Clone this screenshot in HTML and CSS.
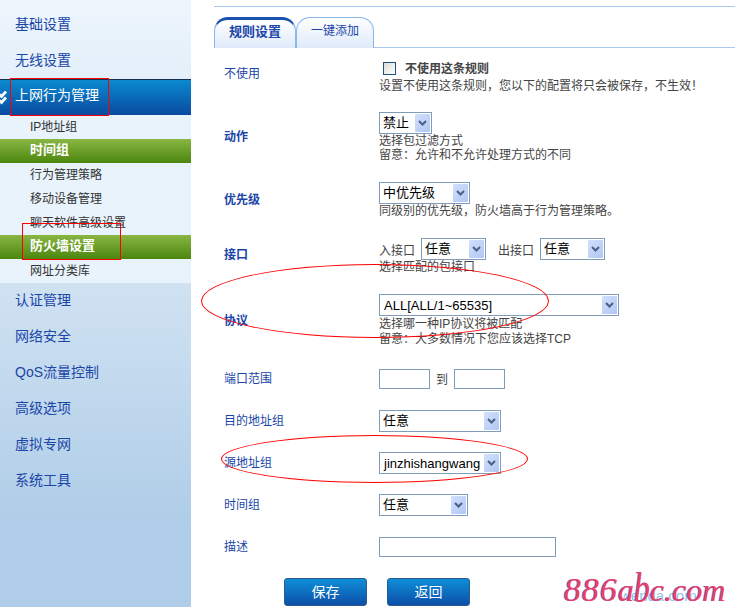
FILE: index.html
```html
<!DOCTYPE html>
<html lang="zh-CN">
<head>
    <meta charset="UTF-8">
    <meta name="viewport" content="width=device-width, initial-scale=1.0">
    <title>防火墙设置</title>
    <link rel="stylesheet" href="styles.css">
</head>
<body>
    <div class="page">
        <!-- Left menu -->
        <nav class="sidebar">
            <div class="menu-top">
                <a class="menu-item">基础设置</a>
                <a class="menu-item">无线设置</a>
            </div>
            <a class="menu-current">
                <svg class="menu-tick" width="7" height="14" viewBox="0 0 7 14">
                    <path d="M-2 2.5 L1.5 5.5 L6 0.5 M-2 8.5 L1.5 11.5 L6 6.5" fill="none" stroke="#fff" stroke-width="2.8"/>
                </svg>
                上网行为管理
            </a>
            <div class="submenu">
                <a class="sub-item">IP地址组</a>
                <a class="sub-item active">时间组</a>
                <a class="sub-item">行为管理策略</a>
                <a class="sub-item">移动设备管理</a>
                <a class="sub-item">聊天软件高级设置</a>
                <a class="sub-item active">防火墙设置</a>
                <a class="sub-item">网址分类库</a>
            </div>
            <div class="menu-bottom">
                <a class="menu-item">认证管理</a>
                <a class="menu-item">网络安全</a>
                <a class="menu-item">QoS流量控制</a>
                <a class="menu-item">高级选项</a>
                <a class="menu-item">虚拟专网</a>
                <a class="menu-item">系统工具</a>
            </div>
        </nav>

        <!-- Rule form -->
        <main class="content">
            <div class="tabs">
                <a class="tab tab-on">规则设置</a>
                <a class="tab tab-off">一键添加</a>
            </div>

            <div class="row row-use">
                <div class="label">不使用</div>
                <div class="field">
                    <label class="check-line"><span class="checkbox"></span><b>不使用这条规则</b></label>
                    <p class="hint">设置不使用这条规则，您以下的配置将只会被保存，不生效！</p>
                </div>
            </div>

            <div class="row row-action">
                <div class="label strong">动作</div>
                <div class="field">
                    <div class="select w-53"><span class="cn">禁止</span><i class="arrow"><svg width="9" height="6" viewBox="0 0 9 6"><path d="M1 1 L4.5 4.5 L8 1" fill="none" stroke="#4a5f85" stroke-width="2"/></svg></i></div>
                    <p class="hint">选择包过滤方式</p>
                    <p class="hint">留意：允许和不允许处理方式的不同</p>
                </div>
            </div>

            <div class="row row-priority">
                <div class="label strong">优先级</div>
                <div class="field">
                    <div class="select w-91"><span class="cn">中优先级</span><i class="arrow"><svg width="9" height="6" viewBox="0 0 9 6"><path d="M1 1 L4.5 4.5 L8 1" fill="none" stroke="#4a5f85" stroke-width="2"/></svg></i></div>
                    <p class="hint">同级别的优先级，防火墙高于行为管理策略。</p>
                </div>
            </div>

            <div class="row row-port">
                <div class="label strong">接口</div>
                <div class="field">
                    <div class="inline-line">
                        <span class="inline-text">入接口</span>
                        <div class="select w-65"><span class="cn">任意</span><i class="arrow"><svg width="9" height="6" viewBox="0 0 9 6"><path d="M1 1 L4.5 4.5 L8 1" fill="none" stroke="#4a5f85" stroke-width="2"/></svg></i></div>
                        <span class="inline-text out">出接口</span>
                        <div class="select w-65"><span class="cn">任意</span><i class="arrow"><svg width="9" height="6" viewBox="0 0 9 6"><path d="M1 1 L4.5 4.5 L8 1" fill="none" stroke="#4a5f85" stroke-width="2"/></svg></i></div>
                    </div>
                    <p class="hint">选择匹配的包接口</p>
                </div>
            </div>

            <div class="row row-proto">
                <div class="label strong">协议</div>
                <div class="field">
                    <div class="select w-240"><span>ALL[ALL/1~65535]</span><i class="arrow"><svg width="9" height="6" viewBox="0 0 9 6"><path d="M1 1 L4.5 4.5 L8 1" fill="none" stroke="#4a5f85" stroke-width="2"/></svg></i></div>
                    <p class="hint hint-gap">选择哪一种IP协议将被匹配</p>
                    <p class="hint hint-gap">留意：大多数情况下您应该选择TCP</p>
                </div>
            </div>

            <div class="row row-range">
                <div class="label">端口范围</div>
                <div class="field range-line">
                    <input class="text-input w-51" type="text">
                    <span class="inline-text">到</span>
                    <input class="text-input w-51" type="text">
                </div>
            </div>

            <div class="row row-addr">
                <div class="label">目的地址组</div>
                <div class="field">
                    <div class="select w-122"><span class="cn">任意</span><i class="arrow"><svg width="9" height="6" viewBox="0 0 9 6"><path d="M1 1 L4.5 4.5 L8 1" fill="none" stroke="#4a5f85" stroke-width="2"/></svg></i></div>
                </div>
            </div>

            <div class="row row-addr">
                <div class="label">源地址组</div>
                <div class="field">
                    <div class="select w-122"><span>jinzhishangwang</span><i class="arrow"><svg width="9" height="6" viewBox="0 0 9 6"><path d="M1 1 L4.5 4.5 L8 1" fill="none" stroke="#4a5f85" stroke-width="2"/></svg></i></div>
                </div>
            </div>

            <div class="row row-time">
                <div class="label">时间组</div>
                <div class="field">
                    <div class="select w-89"><span class="cn">任意</span><i class="arrow"><svg width="9" height="6" viewBox="0 0 9 6"><path d="M1 1 L4.5 4.5 L8 1" fill="none" stroke="#4a5f85" stroke-width="2"/></svg></i></div>
                </div>
            </div>

            <div class="row row-desc">
                <div class="label">描述</div>
                <div class="field">
                    <input class="text-input w-177" type="text">
                </div>
            </div>

            <div class="buttons">
                <button class="btn">保存</button>
                <button class="btn">返回</button>
            </div>
        </main>

        <!-- Red marks drawn over the screenshot -->
        <div class="mark-rect mark-menu"></div>
        <div class="mark-rect mark-firewall"></div>
        <div class="mark-oval mark-proto"></div>
        <div class="mark-oval mark-source"></div>

        <div class="watermark-under">wenda.com</div>
        <div class="watermark"><span class="wm-num">886</span>a<span class="wm-tall">b</span>c.com</div>
    </div>
</body>
</html>
```

FILE: styles.css
```css
/* Reset */
* {
    margin: 0;
    padding: 0;
    box-sizing: border-box;
    font-family: "Liberation Sans", "Noto Sans CJK SC", sans-serif;
}

body {
    background: #fff;
    overflow: hidden;
}

.page {
    position: relative;
    display: flex;
    width: 735px;
    height: 607px;
    overflow: hidden;
}

/* Sidebar */
.sidebar {
    display: flex;
    flex-direction: column;
    flex: 0 0 191px;
    height: 607px;
    background: #e8f3fc;
}

.menu-top {
    height: 79px;
    padding-top: 6px;
    background: linear-gradient(to bottom, #eef6fd, #e3effa);
}

.menu-item {
    display: block;
    height: 36px;
    padding-left: 15px;
    line-height: 36px;
    font-size: 14px;
    color: #1a46a8;
}

.menu-bottom .menu-item {
    line-height: 34px;
}

.menu-current {
    position: relative;
    display: block;
    height: 36px;
    padding-left: 15px;
    line-height: 31px;
    font-size: 14px;
    color: #fff;
    border-top: 1px solid #12304f;
    background: linear-gradient(to bottom, #0a8ad0, #0a4aa0);
}

.menu-tick {
    position: absolute;
    left: 0;
    top: 11px;
}

.submenu {
    height: 168px;
    background: #e8f3fc;
}

.sub-item {
    display: block;
    height: 24px;
    padding-left: 30px;
    line-height: 24px;
    font-size: 12px;
    color: #333;
}

.sub-item.active {
    line-height: 22px;
    font-size: 13px;
    font-weight: bold;
    color: #fff;
    background: linear-gradient(to bottom, #8ab643, #4b860f);
}

.menu-bottom {
    flex: 1;
    background: linear-gradient(to bottom, #d0e2f2 0, #afcde8 243px, #afcde8 100%);
}

/* Main area */
.content {
    flex: 1;
    height: 607px;
    padding: 6px 0 0 23px;
}

.tabs {
    display: flex;
    align-items: flex-end;
    height: 42px;
    margin-bottom: 12px;
    padding-top: 10px;
    border-top: 1px solid #a8c8f0;
    border-bottom: 1px solid #a8c8f0;
}

.tab {
    height: 31px;
    margin-bottom: -1px;
    text-align: center;
    border: 1px solid #8ab6ea;
    border-bottom: none;
    border-radius: 14px 14px 0 0;
    background: linear-gradient(to bottom, #fff, #dfeafa);
    color: #1a46a8;
}

.tab-on {
    width: 82px;
    border-top: 3px solid #1a52b0;
    line-height: 23px;
    font-size: 13px;
    font-weight: bold;
}

.tab-off {
    width: 78px;
    line-height: 27px;
    font-size: 12px;
}

/* Form rows */
.row {
    display: grid;
    grid-template-columns: 155px 1fr;
    padding-left: 10px;
}

.row-use { height: 52px; }
.row-action { height: 70px; }
.row-priority { height: 56px; }
.row-port { height: 56px; }
.row-proto { height: 75px; }
.row-range { height: 41px; }
.row-addr { height: 42px; }
.row-time { height: 43px; }
.row-desc { height: 41px; }

.label {
    font-size: 12px;
    line-height: 14px;
    color: #1a46a8;
}

.label.strong {
    font-weight: bold;
}

.row-use .label { margin-top: 7px; }
.row-action .label { margin-top: 18px; }
.row-priority .label { margin-top: 11px; }
.row-port .label { margin-top: 10px; }
.row-proto .label { margin-top: 20px; }
.row-range .label { margin-top: 3px; }
.row-addr .label { margin-top: 4px; }
.row-time .label { margin-top: 4px; }
.row-desc .label { margin-top: 3px; }

.hint {
    font-size: 12px;
    line-height: 14px;
    color: #444;
}

.hint-gap {
    line-height: 15px;
}

.row-proto .select {
    margin-bottom: 1px;
}

.check-line {
    display: flex;
    align-items: center;
    gap: 9px;
    height: 16px;
    margin-bottom: 3px;
    padding-left: 4px;
    font-size: 12px;
    color: #444;
}

.check-line b {
    padding-bottom: 2px;
}

.checkbox {
    width: 13px;
    height: 13px;
    border: 1px solid #1c5180;
    background: linear-gradient(135deg, #dcdcd7, #fff);
}

/* Select boxes */
.select {
    display: flex;
    align-items: center;
    justify-content: space-between;
    height: 22px;
    padding: 0 1px 0 4px;
    border: 1px solid #7f9db9;
    background: #fff;
    font-size: 13px;
    color: #000;
    white-space: nowrap;
}

.select .cn {
    margin-left: -1px;
    padding-bottom: 3px;
}

.arrow {
    display: flex;
    align-items: center;
    justify-content: center;
    flex: 0 0 15px;
    height: 18px;
    border-radius: 1px;
    background: linear-gradient(135deg, #d3e0fb, #b0c6f5);
}

.w-53 { width: 53px; }
.w-65 { width: 65px; }
.w-89 { width: 89px; }
.w-91 { width: 91px; }
.w-122 { width: 122px; }
.w-240 { width: 240px; }
.w-51 { width: 51px; }
.w-177 { width: 177px; }

.inline-line {
    display: flex;
    align-items: center;
}

.inline-text {
    font-size: 12px;
    color: #444;
    white-space: nowrap;
}

.inline-line .inline-text {
    margin-right: 6px;
}

.inline-line .out {
    margin-left: 12px;
}

.range-line {
    display: flex;
    align-items: flex-start;
    gap: 6px;
}

.range-line .inline-text {
    line-height: 22px;
}

.text-input {
    height: 20px;
    border: 1px solid #7f9db9;
    background: #fff;
}

/* Buttons */
.buttons {
    display: flex;
    gap: 20px;
    padding-left: 70px;
}

.btn {
    width: 83px;
    height: 28px;
    padding-bottom: 3px;
    border: 1px solid #2a5a90;
    border-radius: 3px;
    background: linear-gradient(to bottom, #0e8ed8, #0d4fa8);
    color: #fff;
    font-size: 14px;
}

/* Red annotation marks */
.mark-rect {
    position: absolute;
    border: 1px solid #f00;
}

.mark-menu {
    left: 10px;
    top: 78px;
    width: 99px;
    height: 38px;
}

.mark-firewall {
    left: 22px;
    top: 223px;
    width: 99px;
    height: 37px;
}

.mark-oval {
    position: absolute;
    border: 1px solid #f00;
    border-radius: 50%;
}

.mark-proto {
    left: 201px;
    top: 264px;
    width: 348px;
    height: 74px;
}

.mark-source {
    left: 221px;
    top: 435px;
    width: 307px;
    height: 48px;
}

/* Watermark bottom right */
.watermark {
    position: absolute;
    left: 564px;
    top: 575px;
    height: 32px;
    font-family: "Liberation Serif", serif;
    font-style: italic;
    font-size: 32px;
    line-height: 30px;
    color: #f0405c;
    text-shadow: -1px 0 0 rgba(70, 80, 240, 0.8);
    white-space: nowrap;
}

.wm-num {
    font-size: 34px;
    font-family: inherit;
    letter-spacing: 1px;
}

.wm-tall {
    display: inline-block;
    font-family: inherit;
    transform: scaleY(1.35);
    transform-origin: 50% 78%;
}

.watermark-under {
    position: absolute;
    left: 620px;
    top: 588px;
    font-size: 15px;
    line-height: 16px;
    color: #8fc4e4;
    white-space: nowrap;
}
```
